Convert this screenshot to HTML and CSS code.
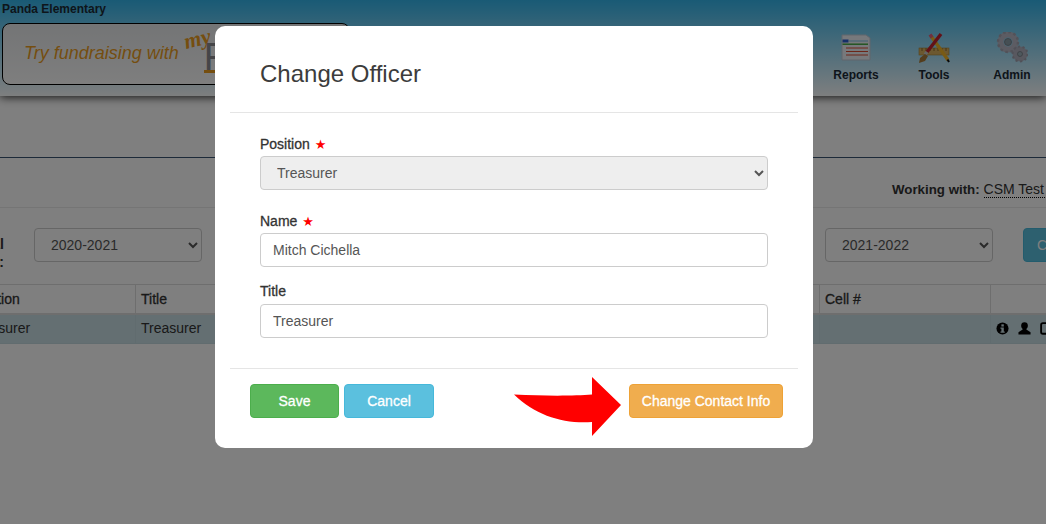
FILE: index.html
```html
<!DOCTYPE html>
<html lang="en">
<head>
<meta charset="utf-8">
<title>Change Officer</title>
<link rel="stylesheet" href="styles.css">
</head>
<body>
<div class="page">
  <header class="top">
    <div class="school">Panda Elementary</div>
    <div class="top-row">
      <div class="promo">
        <span class="promo-text">Try fundraising with</span>
        <span class="promo-logo"><span class="logo-my">my</span><span class="logo-f">F</span></span>
      </div>
      <nav class="nav">
        <div class="nav-item">
          <svg class="nav-icon" viewBox="0 0 32 32"><path d="M2 3h24l4 3v22H2z" fill="#eef2f8" stroke="#c4ccd8"/><rect x="2.500" y="7.500" width="6" height="3" fill="#2a5fd0"/><rect x="9" y="8.500" width="19" height="1" fill="#7fc4e8"/><rect x="2.500" y="11.500" width="25.500" height="1.400" fill="#3aa63a"/><rect x="6" y="15.500" width="22" height="1" fill="#d94a30"/><rect x="6" y="19" width="22" height="1" fill="#d94a30"/><rect x="6" y="22.500" width="22" height="1" fill="#d94a30"/></svg>
          <span>Reports</span>
        </div>
        <div class="nav-item">
          <svg class="nav-icon" viewBox="0 0 32 32"><rect x="1" y="16" width="30" height="7" fill="#d8b060" stroke="#a88436" stroke-width=".6"/><path d="M4 16v3M8 16v3M12 16v3M16 16v3M20 16v3M24 16v3M28 16v3" stroke="#7a5c20" stroke-width=".8"/><path d="M13 4l17 24" stroke="#f0b428" stroke-width="3.400"/><path d="M12 2.500l2 3" stroke="#e0607a" stroke-width="3.400"/><path d="M29.500 27.500l1.500 2.500" stroke="#111" stroke-width="2"/><path d="M23 2L9 20" stroke="#c4222e" stroke-width="3.400"/><path d="M9 20l-2 2.500" stroke="#c8c8c8" stroke-width="3.400"/><path d="M7 22l3 2-3 5-6 2 1-5z" fill="#a87a3a"/></svg>
          <span>Tools</span>
        </div>
        <div class="nav-item">
          <svg class="nav-icon" viewBox="0 0 32 32"><circle cx="12" cy="10" r="7.500" fill="none" stroke="#b8b8c6" stroke-width="6"/><circle cx="12" cy="10" r="10" fill="none" stroke="#a4a4b2" stroke-width="2.400" stroke-dasharray="2.600 2.640"/><circle cx="12" cy="10" r="3.500" fill="#8a9ea8" stroke="#77777f" stroke-width=".8"/><circle cx="24" cy="22" r="5" fill="none" stroke="#b0b0be" stroke-width="5"/><circle cx="24" cy="22" r="7.500" fill="none" stroke="#a0a0ae" stroke-width="2" stroke-dasharray="2.200 2.510"/><circle cx="24" cy="22" r="2.500" fill="#9cb0ba" stroke="#77777f" stroke-width=".8"/></svg>
          <span>Admin</span>
        </div>
      </nav>
    </div>
  </header>
  <div class="subnav"></div>
  <div class="working"><b>Working with:</b> <span class="working-name">CSM Test School</span></div>
  <div class="filters">
    <div class="filter-label">School Fiscal<br>Year:</div>
    <select class="control year"><option>2020-2021</option></select>
    <div class="filter-gap"></div>
    <select class="control year"><option>2021-2022</option></select>
    <button class="copy" type="button">Copy</button>
  </div>
  <table class="officers">
    <colgroup><col class="c1"><col class="c2"><col class="c3"><col class="c4"></colgroup>
    <thead><tr><th>Position</th><th>Title</th><th>Cell #</th><th></th></tr></thead>
    <tbody><tr>
      <td>Treasurer</td><td>Treasurer</td><td></td>
      <td class="actions">
        <svg class="act" viewBox="0 0 14 14"><circle cx="7" cy="7" r="6.500" fill="#000"/><rect x="5.800" y="2.500" width="2.600" height="2.400" fill="#c8dee4"/><path d="M4.800 6h3.600v4.200h1v1.400H4.800v-1.400h1V7.400h-1z" fill="#c8dee4"/></svg>
        <svg class="act" viewBox="0 0 14 14"><circle cx="7" cy="4" r="3.600" fill="#000"/><path d="M5 6h4v2l4.500 3v2.500H.5V11L5 8z" fill="#000"/></svg>
        <svg class="act" viewBox="0 0 14 14"><rect x="1.200" y="1.200" width="11.500" height="11.500" rx="2" fill="none" stroke="#000" stroke-width="2"/></svg>
      </td>
    </tr></tbody>
  </table>
</div>
<div class="backdrop"></div>
<div class="modal">
  <div class="modal-header"><h4>Change Officer</h4></div>
  <form class="modal-body">
    <label class="field-label first">Position <span class="req">★</span></label>
    <select class="control wide" disabled><option>Treasurer</option></select>
    <label class="field-label second">Name <span class="req">★</span></label>
    <input class="control wide" type="text" value="Mitch Cichella">
    <label class="field-label third">Title</label>
    <input class="control wide" type="text" value="Treasurer">
  </form>
  <div class="modal-footer">
    <button class="btn save" type="button">Save</button>
    <button class="btn cancel" type="button">Cancel</button>
    <svg class="arrow" viewBox="0 0 108 62"><path d="M0 18.500C30 20 60 20 78 18.500V1l29 28-29 31V46C50 48 22 40 0 18.500z" fill="#f00"/></svg>
    <button class="btn contact" type="button">Change Contact Info</button>
  </div>
</div>
</body>
</html>
```
FILE: styles.css
```css
* { box-sizing: border-box; }
html, body { margin: 0; height: 100%; overflow: hidden; }
body { background: #fff; font: 14px/20px "Liberation Sans", Arial, sans-serif; color: #333; }
.page { width: 1046px; height: 524px; overflow: hidden; }

.top { height: 96px; background: linear-gradient(#33b5eb, #fcfeff); box-shadow: 0 1px 9px rgba(0,0,0,.85); position: relative; }
.school { font-weight: 700; font-size: 12px; line-height: 14px; padding: 2px 0 0 2px; color: #1c2b36; height: 23px; }
.top-row { display: flex; justify-content: space-between; }
.promo { width: 348px; height: 62px; margin-left: 2px; border: 1px solid #000; border-radius: 8px; display: flex; align-items: center; padding-left: 21px; overflow: hidden; background: linear-gradient(#e8eaec, #fdfdfd); }
.promo-text { font-style: italic; font-size: 18px; color: #ea9c1f; margin-bottom: 2px; }
.promo-logo { position: relative; margin-left: 5px; width: 80px; height: 60px; }
.logo-my { position: absolute; left: 0; top: 4px; font: italic 700 22px/22px "Liberation Serif", serif; color: #ea9c1f; transform: rotate(-14deg); }
.logo-f { position: absolute; left: 20px; top: 20px; font-size: 38px; line-height: 26px; color: #8a8a90; border-bottom: 3px solid #ea9c1f; }
.nav { display: flex; margin-right: -5px; margin-top: 9px; }
.nav-item { width: 78px; display: flex; flex-direction: column; align-items: center; font-weight: 700; font-size: 12px; line-height: 14px; color: #1c2b36; }
.nav-icon { width: 32px; height: 32px; margin-bottom: 4px; display: block; }

.subnav { height: 62px; border-bottom: 1px solid #3a5472; }
.working { height: 50px; border-bottom: 1px solid #eaeaea; padding-top: 21px; padding-left: 892px; white-space: nowrap; }
.working b { font-size: 13.300px; }
.working-name { border-bottom: 1px dotted #000; }
.filters { height: 76px; display: flex; align-items: flex-start; padding-top: 20px; margin-left: -100px; }
.filter-label { flex: none; width: 134px; font-weight: 700; line-height: 18px; white-space: nowrap; text-align: right; padding: 7px 30px 0 0; }
.control { height: 34px; border: 1px solid #ccc; border-radius: 4px; background: #fff; color: #555; font: 14px/20px "Liberation Sans", Arial, sans-serif; padding: 6px 12px; opacity: 1; display: block; }
.year { width: 168px; flex: none; }
.filter-gap { width: 623px; flex: none; }
.copy { flex: none; width: 70px; height: 34px; margin-left: 30px; border: 1px solid #46b8da; border-radius: 4px; background: #5bc0de; color: #fff; font: 14px "Liberation Sans", Arial, sans-serif; text-align: left; padding-left: 13px; }

.officers { border-collapse: collapse; table-layout: fixed; width: 1136px; margin-left: -36px; }
.c1 { width: 171px; } .c2 { width: 684px; } .c3 { width: 171px; } .c4 { width: 110px; }
.officers th { height: 28px; padding: 4px 5px; text-align: left; font-weight: 400; -webkit-text-stroke: .3px; border: 1px solid #ddd; border-bottom-width: 2px; }
.officers td { height: 29px; padding: 2px 5px 3px; background: #c8dee4; border: 1px solid #c2d8de; border-top: 0; color: #333; }
.actions { white-space: nowrap; }
.act { width: 13px; height: 13px; margin-right: 5px; vertical-align: -2px; }

.backdrop { position: fixed; inset: 0; background: rgba(0,0,0,.5); }
.modal { position: absolute; left: 215px; top: 26px; width: 598px; height: 422px; background: #fff; border-radius: 10px; padding: 0 15px; }
.modal-header { height: 87px; border-bottom: 1px solid #e5e5e5; padding: 33px 0 0 30px; }
.modal-header h4 { margin: 0; font-size: 24px; line-height: 30px; font-weight: 400; color: #3c3c3c; }
.modal-body { height: 256px; padding: 21px 30px 0; border-bottom: 1px solid #e5e5e5; display: flex; flex-direction: column; }
.field-label { display: block; height: 22px; line-height: 20px; color: #333; -webkit-text-stroke: .3px; }
.field-label.second { margin-top: 21px; }
.field-label.third { margin-top: 14px; height: 23px; }
.req { color: #f00; -webkit-text-stroke: 0; font: 13px/20px "DejaVu Sans", sans-serif; margin-left: 1px; }
.wide { width: 508px; flex: none; }
.control[disabled] { background: #eee; }
.modal-footer { display: flex; align-items: flex-start; padding: 15px 0 0 20px; position: relative; }
.btn { height: 34px; border-radius: 4px; border: 1px solid; color: #fff; font: 14px "Liberation Sans", Arial, sans-serif; -webkit-text-stroke: .3px; padding: 0; }
.save { width: 89px; background: #5cb85c; border-color: #4cae4c; }
.cancel { width: 90px; margin-left: 5px; background: #5bc0de; border-color: #46b8da; }
.contact { width: 154px; margin-left: 195px; background: #f0ad4e; border-color: #eea236; }
.arrow { position: absolute; left: 284px; top: 7px; width: 108px; height: 62px; }
```
